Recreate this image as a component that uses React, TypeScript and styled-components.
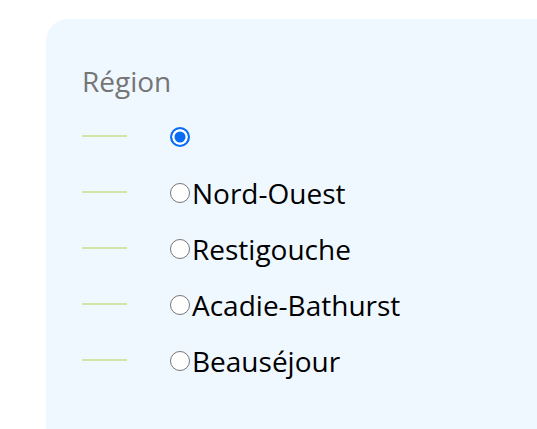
import React from "react";
import styled, { createGlobalStyle } from "styled-components";

const Global = createGlobalStyle`
  html, body { margin: 0; padding: 0; background: #ffffff; }
  body { font-family: "Open Sans", "Liberation Sans", sans-serif; overflow: hidden; }
`;

const Page = styled.div`
  padding: 19px 0 0 46px;
  height: 429px;
  box-sizing: border-box;
`;

const Panel = styled.section`
  background: #f0f8ff;
  border-top-left-radius: 22px;
  height: 420px;
  padding: 44px 0 0 36px;
  box-sizing: border-box;
`;

const Title = styled.h2`
  margin: 0;
  font-weight: 400;
  font-size: 28px;
  line-height: 36px;
  color: #757575;
`;

const List = styled.div`
  display: flex;
  flex-direction: column;
  margin-top: 10px;
`;

const Row = styled.label`
  display: flex;
  align-items: center;
  height: 56px;
`;

const Rule = styled.span`
  width: 45px;
  height: 2px;
  background: #cfe5a9;
  margin-right: 43px;
  margin-top: -3px;
`;

const Radio = styled.span<{ $checked?: boolean }>`
  width: 20px;
  height: 20px;
  box-sizing: border-box;
  border-radius: 50%;
  flex: none;
  border: ${(p) => (p.$checked ? "2.5px solid #0a6cf5" : "1.5px solid #767676")};
  background: ${(p) => (p.$checked ? "#0a6cf5" : "#ffffff")};
  box-shadow: ${(p) => (p.$checked ? "inset 0 0 0 2.5px #ffffff" : "none")};
  margin-right: 2px;
`;

const Text = styled.span`
  font-size: 28px;
  line-height: 36px;
  color: #000;
`;

const options = ["", "Nord-Ouest", "Restigouche", "Acadie-Bathurst", "Beauséjour"];

export default function App() {
  return (
    <>
      <Global />
      <Page>
        <Panel>
          <Title>Région</Title>
          <List>
            {options.map((o, i) => (
              <Row key={i}>
                <Rule />
                <Radio $checked={i === 0} />
                {o && <Text>{o}</Text>}
              </Row>
            ))}
          </List>
        </Panel>
      </Page>
    </>
  );
}
